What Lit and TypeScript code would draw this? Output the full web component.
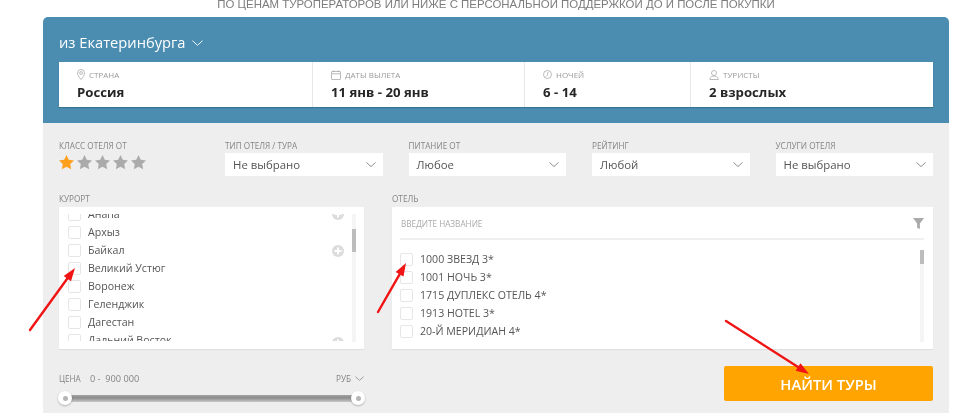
import { LitElement, html, css, svg } from "lit";
import { customElement } from "lit/decorators.js";

const chevron = (w: number, h: number, color: string) => html`<svg class="chev" width=${w} height=${h} viewBox="0 0 12 6" fill="none" stroke=${color} stroke-width="1"><path d="M.5.5 6 5.5 11.5.5" /></svg>`;

const starPts = "7.5,0 9.8,4.8 15,5.4 11.2,9 12.2,14.2 7.5,11.7 2.8,14.2 3.8,9 0,5.4 5.2,4.8";

const arrow = (x1: number, y1: number, x2: number, y2: number) => {
  const a = Math.atan2(y2 - y1, x2 - x1);
  const len = 13, hw = 4.5;
  const bx = x2 - len * Math.cos(a), by = y2 - len * Math.sin(a);
  const nx = -Math.sin(a) * hw, ny = Math.cos(a) * hw;
  return svg`<line x1=${x1} y1=${y1} x2=${bx} y2=${by} stroke="#f01414" stroke-width="2.4" stroke-linecap="round"/>
  <polygon fill="#f01414" points="${x2},${y2} ${bx + nx},${by + ny} ${bx - nx},${by - ny}"/>`;
};

const plus = html`<svg width="12" height="12" viewBox="0 0 12 12"><circle cx="6" cy="6" r="6" fill="#dcdcdc"/><path d="M6 2.5v7M2.5 6h7" stroke="#fff" stroke-width="2"/></svg>`;

@customElement("app-root")
export class AppRoot extends LitElement {
  static styles = css`
    :host { display: block; width: 974px; height: 413px; overflow: hidden; position: relative; background: #fff; font-family: "Open Sans", "Noto Sans", sans-serif; color: #555; filter: blur(.3px); }
    * { box-sizing: border-box; }
    .lead { height: 17px; margin: 0; font: 11.45px/9px "Liberation Sans", sans-serif; color: #7d7d7d; text-align: center; padding-left: 18px; white-space: nowrap; }
    .panel { width: 906px; margin-left: 43px; }
    .blue { background: #4a8db1; border-radius: 5px 5px 0 0; height: 106px; padding: 0 16px; }
    .from { height: 45px; display: flex; align-items: center; gap: 6px; color: #fff; font-size: 14.7px; padding-top: 5px; }
    .from .chev { margin-top: 1px; }
    .summary { display: grid; grid-template-columns: 253px 212px 166px 244px; height: 45px; background: #fff; box-shadow: 0 1px 1px rgba(40,90,120,.5); }
    .cell { padding: 5px 0 0 18px; border-left: 1px solid #e8e8e8; }
    .cell:first-child { border-left: 0; }
    .cell-label { display: flex; align-items: center; gap: 4px; height: 15px; font-size: 8px; color: #999; text-transform: uppercase; }
    .cell-label svg { flex: none; }
    .cell-value { font-size: 13.2px; font-weight: 700; color: #262626; line-height: 20px; }
    .gray { background: #eee; height: 290px; padding: 16px 16px 0; }
    .filters { display: grid; grid-template-columns: 140px repeat(4, 157.5px); column-gap: 26px; }
    .label { height: 14px; line-height: 13px; font-size: 8.2px; color: #858585; text-transform: uppercase; white-space: nowrap; }
    .stars { display: flex; gap: 3px; margin-top: 2px; }
    .select { height: 23px; background: #fff; display: flex; align-items: center; justify-content: space-between; padding: 0 7px 0 8px; font-size: 11.4px; color: #555; }
    .lists { display: grid; grid-template-columns: 305px 541px; column-gap: 28px; margin-top: 16px; }
    .lists .label { height: 15px; }
    .box { position: relative; height: 142px; background: #fff; box-shadow: 0 1px 1px rgba(0,0,0,.06); }
    .viewport { position: absolute; left: 0; right: 0; top: 7px; height: 127px; overflow: hidden; }
    .rows { margin-top: -9px; padding-left: 9px; }
    .row { display: flex; align-items: center; gap: 7px; height: 18px; font-size: 10.6px; color: #555; white-space: nowrap; }
    .check { width: 13px; height: 13px; flex: none; background: #fff; border: 1px solid #e6e6e6; border-radius: 2px; }
    .track { position: absolute; width: 4px; background: #f5f5f5; }
    .thumb { position: absolute; left: 0; width: 4px; background: #bdbdbd; }
    .resort .track { right: 8px; top: 7px; height: 128px; }
    .resort .thumb { top: 15px; height: 23px; }
    .viewport .icon { position: absolute; left: 272.5px; display: block; line-height: 0; }
    .search { margin: 0 9px 0 8px; height: 33px; border-bottom: 2px solid #f0f0f0; display: flex; align-items: center; justify-content: space-between; padding: 2px 0 0 1px; font-size: 8.2px; color: #aaa; text-transform: uppercase; }
    .hotel .rows { margin-top: 0; padding: 10px 0 0 8px; }
    .hotel .row { gap: 7px; }
    .hotel .track { right: 9px; top: 43px; height: 92px; }
    .hotel .thumb { top: 0; height: 14px; }
    .bottom { display: flex; justify-content: space-between; margin-top: 17px; }
    .price { width: 305px; }
    .price-head { display: flex; justify-content: space-between; align-items: center; height: 24px; font-size: 8.2px; color: #858585; text-transform: uppercase; }
    .price-head b { font-weight: 400; font-size: 9.2px; margin-left: 7px; }
    .rub { display: flex; align-items: center; gap: 4px; }
    .slider { position: relative; margin: 5px 6px 0; height: 7px; background: linear-gradient(#a2a2a2, #8c8c8c 40%, #c8c8c8); }
    .knob { position: absolute; top: -4px; width: 14px; height: 14px; border-radius: 50%; background: #fff; box-shadow: 0 1px 2px rgba(0,0,0,.25); display: flex; align-items: center; justify-content: center; }
    .knob::after { content: ""; width: 5px; height: 5px; border-radius: 50%; background: #b5b5b5; }
    .knob.l { left: -7px; }
    .knob.r { right: -7px; }
    .go { width: 209px; height: 35px; background: #ffa400; border-radius: 2px; color: #fff; font-size: 14.8px; font-weight: 600; display: flex; align-items: center; justify-content: center; }
    .arrows { position: absolute; inset: 0; pointer-events: none; }
  `;

  render() {
    const resorts = ["Анапа", "Архыз", "Байкал", "Великий Устюг", "Воронеж", "Геленджик", "Дагестан", "Дальний Восток"];
    const hotels = ["1000 ЗВЕЗД 3*", "1001 НОЧЬ 3*", "1715 ДУПЛЕКС ОТЕЛЬ 4*", "1913 HOTEL 3*", "20-Й МЕРИДИАН 4*"];
    const selects = [["Тип отеля / тура", "Не выбрано"], ["Питание от", "Любое"], ["Рейтинг", "Любой"], ["Услуги отеля", "Не выбрано"]];
    return html`
      <p class="lead">ПО ЦЕНАМ ТУРОПЕРАТОРОВ ИЛИ НИЖЕ С ПЕРСОНАЛЬНОЙ ПОДДЕРЖКОЙ ДО И ПОСЛЕ ПОКУПКИ</p>
      <div class="panel">
        <section class="blue">
          <div class="from">из Екатеринбурга ${chevron(11, 6, "#fff")}</div>
          <div class="summary">
            <div class="cell">
              <div class="cell-label"><svg width="8" height="11" viewBox="0 0 8 11" fill="none" stroke="#aaa" stroke-width=".8"><path d="M4 10.5C2 8 .5 6 .5 4a3.5 3.5 0 0 1 7 0c0 2-1.500 4-3.500 6.500Z"/><circle cx="4" cy="4" r="1.400"/></svg><span class="first">Страна</span></div>
              <div class="cell-value">Россия</div>
            </div>
            <div class="cell">
              <div class="cell-label"><svg width="10" height="10" viewBox="0 0 10 10" fill="none" stroke="#aaa" stroke-width=".8"><rect x=".5" y="1.500" width="9" height="8" rx=".5"/><path d="M.5 3.800h9M2.800.2v2M7.200.2v2"/></svg>Даты вылета</div>
              <div class="cell-value">11 янв - 20 янв</div>
            </div>
            <div class="cell">
              <div class="cell-label"><svg width="9" height="9" viewBox="0 0 9 9" fill="none" stroke="#aaa" stroke-width=".8"><circle cx="4.500" cy="4.500" r="4"/><path d="M5 2 4.500 5 3 6.500"/></svg>Ночей</div>
              <div class="cell-value">6 - 14</div>
            </div>
            <div class="cell">
              <div class="cell-label"><svg width="10" height="10" viewBox="0 0 10 10" fill="none" stroke="#aaa" stroke-width=".8"><circle cx="5" cy="3" r="2.500"/><path d="M.8 9.500c0-2 1.500-3 2.700-3.300h3c1.200.3 2.700 1.300 2.700 3.300Z"/></svg>Туристы</div>
              <div class="cell-value">2 взрослых</div>
            </div>
          </div>
        </section>
        <section class="gray">
          <div class="filters">
            <div>
              <div class="label">Класс отеля от</div>
              <div class="stars">
                ${[0, 1, 2, 3, 4].map((i) => html`<svg width="15" height="15" viewBox="0 0 15 15"><polygon points=${starPts} fill=${i === 0 ? "#ff9f1c" : "#ababab"} /></svg>`)}
              </div>
            </div>
            ${selects.map(([l, v]) => html`<div><div class="label">${l}</div><div class="select">${v}${chevron(10, 5, "#777")}</div></div>`)}
          </div>
          <div class="lists">
            <div>
              <div class="label">Курорт</div>
              <div class="box resort">
                <div class="viewport">
                  <div class="rows">${resorts.map((r) => html`<div class="row"><span class="check"></span>${r}</div>`)}</div>
                  <span class="icon" style="top:-6px">${plus}</span>
                  <span class="icon" style="top:31px">${plus}</span>
                  <span class="icon" style="top:123px">${plus}</span>
                </div>
                <div class="track"><div class="thumb"></div></div>
              </div>
            </div>
            <div>
              <div class="label">Отель</div>
              <div class="box hotel">
                <div class="search">Введите название
                  <svg width="11" height="11" viewBox="0 0 12 12"><path d="M0 0h12L7.500 6v6l-3-1.500V6Z" fill="#aaa"/></svg>
                </div>
                <div class="rows">${hotels.map((r) => html`<div class="row"><span class="check"></span>${r}</div>`)}</div>
                <div class="track"><div class="thumb"></div></div>
              </div>
            </div>
          </div>
          <div class="bottom">
            <div class="price">
              <div class="price-head"><span>Цена <b>0 - &nbsp;900 000</b></span><span class="rub">Руб ${chevron(9, 5, "#888")}</span></div>
              <div class="slider"><span class="knob l"></span><span class="knob r"></span></div>
            </div>
            <div class="go">НАЙТИ ТУРЫ</div>
          </div>
        </section>
      </div>
      <svg class="arrows" width="974" height="413" viewBox="0 0 974 413">
        ${arrow(30, 330, 75, 268)}
        ${arrow(378, 312, 406, 263)}
        ${arrow(726, 321, 809, 374)}
      </svg>
    `;
  }
}
